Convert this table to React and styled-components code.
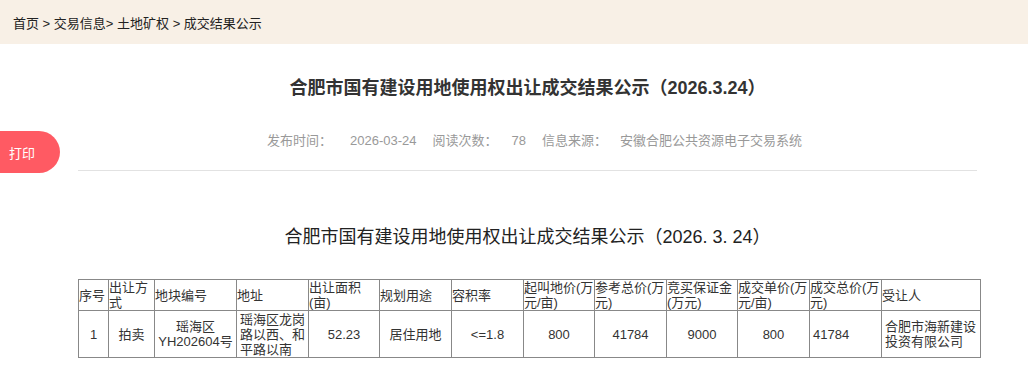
import styled, { createGlobalStyle } from 'styled-components';

const GlobalStyle = createGlobalStyle`
  body {
    margin: 0;
    background: #fff;
    font-family: "Liberation Sans", "Noto Sans CJK SC", sans-serif;
    color: #333;
  }
`;

const Page = styled.div`
  position: relative;
  width: 1028px;
`;

const Crumbs = styled.div`
  height: 44px;
  background: #f8f0e6;
  display: flex;
  align-items: center;
  padding-left: 13px;
  font-size: 13px;
  color: #222;
`;

const Content = styled.div`
  width: 899px;
  margin-left: 78px;
  display: flex;
  flex-direction: column;
  align-items: center;
`;

const Title = styled.h1`
  margin: 0;
  padding-top: 33px;
  font-size: 18px;
  line-height: 22px;
  font-weight: 700;
  color: #333;
`;

const Meta = styled.div`
  margin-top: 32px;
  display: flex;
  font-size: 13px;
  line-height: 20px;
  color: #999;
  padding-left: 14px;
`;

const MetaItem = styled.span`
  margin-right: 16px;
  &:last-child {
    margin-right: 0;
  }
`;

const MetaLabel = styled.span`
  margin-right: ${(p) => p.$gap}px;
`;

const Divider = styled.hr`
  align-self: stretch;
  margin: 19px 0 0;
  border: 0;
  border-top: 1px solid #e2e2e2;
`;

const Subtitle = styled.h2`
  margin: 55px 0 0;
  font-size: 18px;
  line-height: 22px;
  font-weight: 400;
  color: #222;
`;

const Table = styled.table`
  margin-top: 31px;
  align-self: flex-start;
  border-collapse: collapse;
  table-layout: fixed;
  width: 903px;
  font-size: 13px;
  line-height: 15px;
  color: #333;
`;

const Th = styled.td`
  border: 1px solid #888;
  height: 30px;
  padding: 0;
  text-align: left;
  vertical-align: middle;
  line-break: loose;
`;

const Td = styled.td`
  border: 1px solid #888;
  height: 46px;
  padding: 0 0 0 ${(p) => (p.$left ? 3 : 0)}px;
  text-align: ${(p) => (p.$left ? 'left' : 'center')};
  vertical-align: middle;
`;

const PrintButton = styled.button`
  position: absolute;
  left: 0;
  top: 131px;
  width: 60px;
  height: 42px;
  border: 0;
  border-radius: 0 21px 21px 0;
  background: #ff5a63;
  color: #fff;
  font-family: inherit;
  font-size: 13px;
  text-align: left;
  padding: 0 0 0 9px;
  cursor: pointer;
`;

const widths = [30, 46, 82, 72, 71, 72, 72, 71, 72, 71, 72, 72, 99];
const heads = [
  '序号', '出让方式', '地块编号', '地址', '出让面积(亩)', '规划用途', '容积率',
  '起叫地价(万元/亩)', '参考总价(万元)', '竞买保证金(万元)', '成交单价(万元/亩)',
  '成交总价(万元)', '受让人',
];
const row = [
  { v: '1' },
  { v: '拍卖' },
  { v: '瑶海区YH202604号' },
  { v: '瑶海区龙岗路以西、和平路以南', left: true },
  { v: '52.23' },
  { v: '居住用地' },
  { v: '<=1.8' },
  { v: '800' },
  { v: '41784' },
  { v: '9000' },
  { v: '800' },
  { v: '41784', left: true },
  { v: '合肥市海新建设投资有限公司', left: true },
];

export default function App() {
  return (
    <Page>
      <GlobalStyle />
      <Crumbs>首页 &gt; 交易信息&gt; 土地矿权 &gt; 成交结果公示</Crumbs>
      <Content>
        <Title>合肥市国有建设用地使用权出让成交结果公示（2026.3.24）</Title>
        <Meta>
          <MetaItem><MetaLabel $gap={18}>发布时间：</MetaLabel>2026-03-24</MetaItem>
          <MetaItem><MetaLabel $gap={14}>阅读次数：</MetaLabel>78</MetaItem>
          <MetaItem><MetaLabel $gap={13}>信息来源：</MetaLabel>安徽合肥公共资源电子交易系统</MetaItem>
        </Meta>
        <Divider />
        <Subtitle>合肥市国有建设用地使用权出让成交结果公示（2026. 3. 24）</Subtitle>
        <Table>
          <colgroup>
            {widths.map((w, i) => <col key={i} style={{ width: w }} />)}
          </colgroup>
          <tbody>
            <tr>{heads.map((h) => <Th key={h}>{h}</Th>)}</tr>
            <tr>{row.map((c, i) => <Td key={i} $left={c.left}>{c.v}</Td>)}</tr>
          </tbody>
        </Table>
      </Content>
      <PrintButton>打印</PrintButton>
    </Page>
  );
}
